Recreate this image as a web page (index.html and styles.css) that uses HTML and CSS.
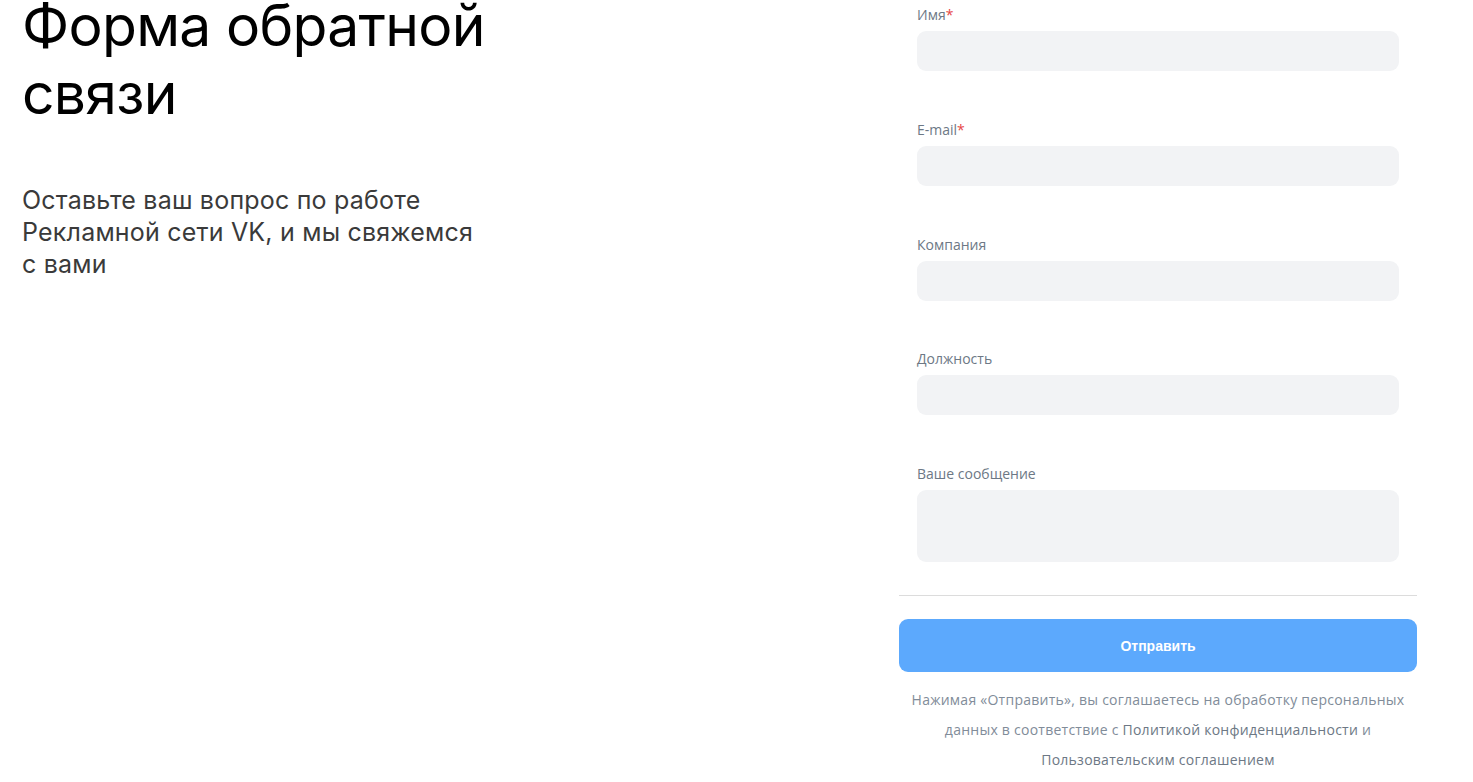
FILE: index.html
```html
<!DOCTYPE html>
<html lang="ru">
<head>
<meta charset="utf-8">
<title>Форма обратной связи</title>
<link rel="stylesheet" href="styles.css">
</head>
<body>
<main class="page">
  <section class="intro">
    <h1 class="intro__title">Форма обратной связи</h1>
    <p class="intro__text">Оставьте ваш вопрос по работе Рекламной сети VK, и мы свяжемся с вами</p>
  </section>
  <form class="form">
    <div class="form__fields">
      <label class="field">
        <span class="field__label">Имя<span class="req">*</span></span>
        <input class="field__input" type="text">
      </label>
      <label class="field">
        <span class="field__label">E-mail<span class="req">*</span></span>
        <input class="field__input" type="email">
      </label>
      <label class="field">
        <span class="field__label">Компания</span>
        <input class="field__input" type="text">
      </label>
      <label class="field">
        <span class="field__label">Должность</span>
        <input class="field__input" type="text">
      </label>
      <label class="field field--last">
        <span class="field__label">Ваше сообщение</span>
        <textarea class="field__input field__textarea"></textarea>
      </label>
    </div>
    <hr class="form__divider">
    <button class="form__submit" type="button">Отправить</button>
    <p class="form__note">Нажимая «Отправить», вы соглашаетесь на обработку персональных данных в соответствие с <a class="form__link" href="#">Политикой конфиденциальности</a> и <a class="form__link" href="#">Пользовательским соглашением</a></p>
  </form>
</main>
</body>
</html>
```

FILE: styles.css
```css
* { box-sizing: border-box; }

html, body {
  margin: 0;
  padding: 0;
  background: #ffffff;
}

body {
  font-family: "Open Sans", "Liberation Sans", sans-serif;
  overflow: hidden;
}

.page {
  display: flex;
  align-items: flex-start;
  width: 1473px;
}

.intro {
  flex: 1;
  padding-left: 22px;
}

.intro__title {
  margin: -8px 0 0;
  width: 510px;
  font-family: Inter, "Noto Sans", sans-serif;
  font-weight: 400;
  font-size: 57px;
  line-height: 68px;
  color: #000000;
  letter-spacing: -0.7px;
}

.intro__text {
  margin: 56px 0 0;
  width: 462px;
  font-family: Inter, "Noto Sans", sans-serif;
  font-size: 25px;
  line-height: 32px;
  letter-spacing: 0.2px;
  color: #3a3a3a;
}

.form {
  width: 518px;
  margin-right: 56px;
  display: flex;
  flex-direction: column;
}

.form__fields {
  padding: 5px 18px 0;
  display: flex;
  flex-direction: column;
  gap: 48.75px;
}

.field {
  display: flex;
  flex-direction: column;
  gap: 6px;
}

.field__label {
  font-size: 14px;
  line-height: 20px;
  color: #6d7885;
}

.req {
  color: #e64646;
}

.field__input {
  display: block;
  width: 100%;
  height: 40px;
  border: none;
  border-radius: 9px;
  background: #f2f3f5;
  outline: none;
  font: inherit;
  padding: 0 12px;
}

.field__textarea {
  height: 72px;
  resize: none;
}

.form__divider {
  margin: 33px 0 0;
  border: none;
  border-top: 1px solid #dcdcdc;
  height: 0;
}

.form__submit {
  margin-top: 23px;
  height: 53px;
  width: 100%;
  border: none;
  border-radius: 9px;
  background: #5ca9fd;
  color: #ffffff;
  font-family: "Liberation Sans", Arial, sans-serif;
  font-weight: 700;
  font-size: 14px;
}

.form__note {
  margin: 13px 0 0;
  padding: 0 4px;
  text-align: center;
  font-size: 14px;
  line-height: 30px;
  letter-spacing: 0.25px;
  color: #818c99;
}

.form__link {
  color: #6d7885;
  text-decoration: none;
}
```
